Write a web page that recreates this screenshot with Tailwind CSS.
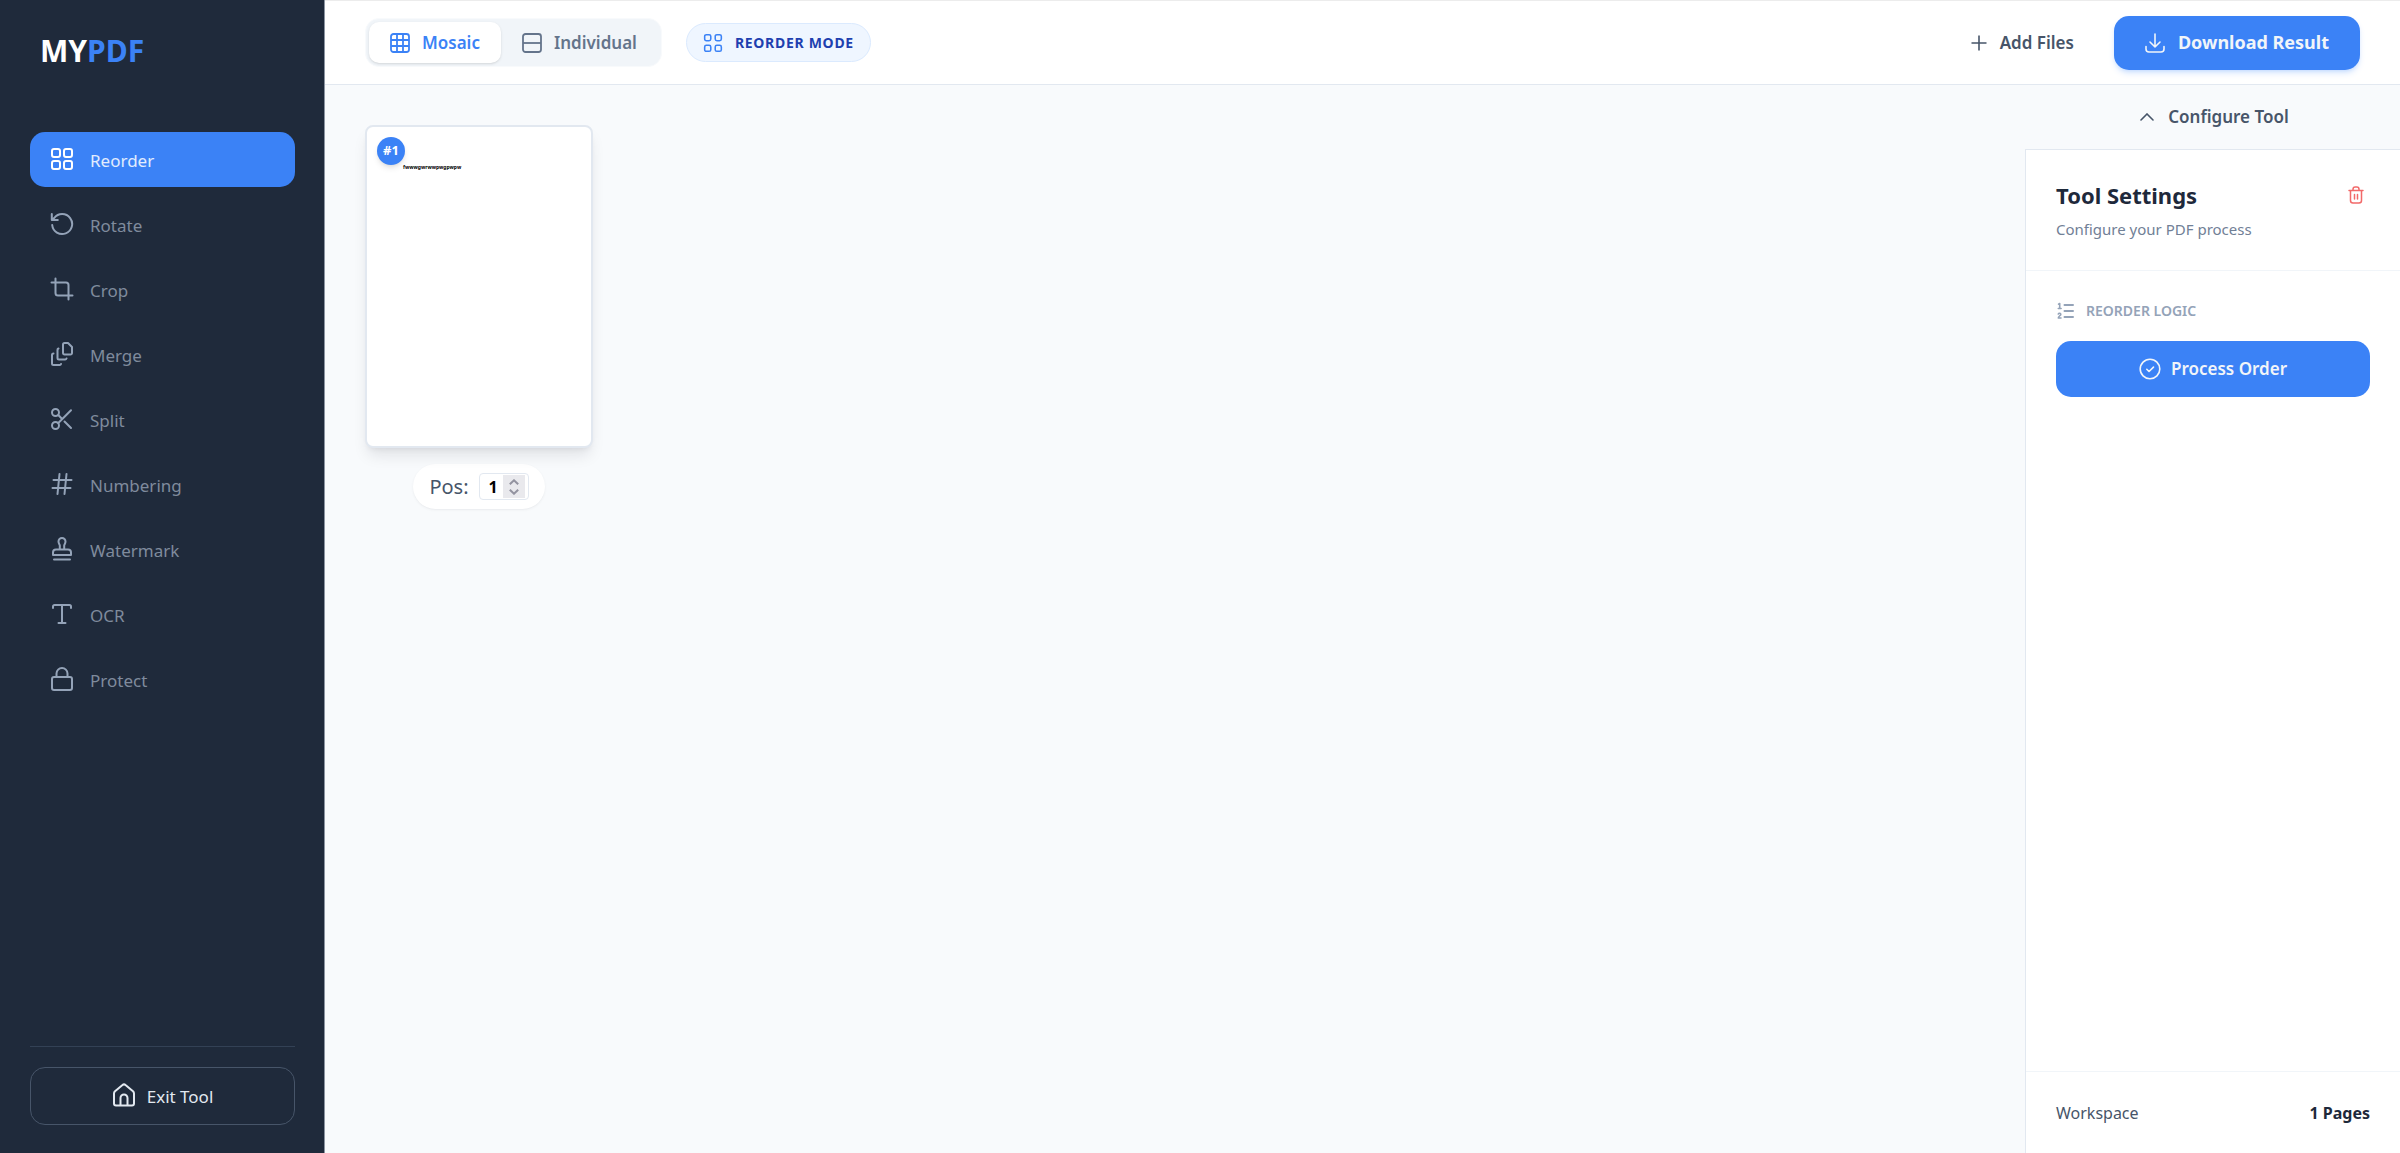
<!DOCTYPE html>
<html lang="en">
<head>
<meta charset="utf-8">
<meta name="viewport" content="width=device-width, initial-scale=1">
<title>MyPDF – Reorder</title>
<script src="https://cdn.jsdelivr.net/npm/@tailwindcss/browser@4"></script>
</head>
<body class="flex min-h-screen bg-[#f8fafc] font-['Noto_Sans',sans-serif] text-[#1e293b]">

<!-- Sidebar -->
<aside class="flex w-[325px] shrink-0 flex-col border-r border-[#8b94a1] bg-[#1f2a3b] pr-[29px] pl-[30px] pb-7">
  <a href="#" class="mt-[30px] ml-[10px] text-[30px] leading-[42px] font-bold text-white">MY<span class="text-[#3b82f6]">PDF</span></a>
  <nav class="mt-[60px] flex flex-col gap-[10px] text-[17px] text-[#94a3b8]">
    <a href="#" aria-current="page" class="flex h-[55px] items-center gap-4 rounded-[15px] bg-[#3b82f6] px-5 pt-[3px] text-white">
      <svg class="mb-1 size-6" viewBox="0 0 24 24" fill="none" stroke="currentColor" stroke-width="2"><rect x="2" y="2" width="8" height="8" rx="2"/><rect x="14" y="2" width="8" height="8" rx="2"/><rect x="2" y="14" width="8" height="8" rx="2"/><rect x="14" y="14" width="8" height="8" rx="2"/></svg>
      <span class="text-white/85">Reorder</span></a>
    <a href="#" class="flex h-[55px] items-center gap-4 rounded-[15px] px-5 pt-[3px]">
      <svg class="mb-1 size-6" viewBox="0 0 24 24" fill="none" stroke="currentColor" stroke-width="2" stroke-linecap="round" stroke-linejoin="round"><path d="M2.200 13A10 10 0 1 0 4.200 6L2 8M1.800 2v6h6"/></svg>
      <span class="text-[#7f8b9d]">Rotate</span></a>
    <a href="#" class="flex h-[55px] items-center gap-4 rounded-[15px] px-5 pt-[3px]">
      <svg class="mb-1 size-6" viewBox="0 0 24 24" fill="none" stroke="currentColor" stroke-width="2" stroke-linecap="round"><path d="M1.500 5.500H16a2.500 2.500 0 0 1 2.500 2.500V22.500M5.500 1.500V16a2.500 2.500 0 0 0 2.500 2.500H22.500"/></svg>
      <span class="text-[#7f8b9d]">Crop</span></a>
    <a href="#" class="flex h-[55px] items-center gap-4 rounded-[15px] px-5 pt-[3px]">
      <svg class="mb-1 size-6" viewBox="0 0 24 24" fill="none" stroke="currentColor" stroke-width="2" stroke-linecap="round" stroke-linejoin="round"><path d="M14.500 1h3.500l4 4v6a1.500 1.500 0 0 1-1.500 1.500h-6A1.500 1.500 0 0 1 13 11V2.500A1.500 1.500 0 0 1 14.500 1ZM8.500 6.500a1.500 1.500 0 0 0-1 1.500v8a1.500 1.500 0 0 0 1.500 1.500h6a1.500 1.500 0 0 0 1.500-1M3.500 11.500A1.500 1.500 0 0 0 2 13v8.500A1.500 1.500 0 0 0 3.500 23h6a1.500 1.500 0 0 0 1.500-1"/></svg>
      <span class="text-[#7f8b9d]">Merge</span></a>
    <a href="#" class="flex h-[55px] items-center gap-4 rounded-[15px] px-5 pt-[3px]">
      <svg class="mb-1 size-6" viewBox="0 0 24 24" fill="none" stroke="currentColor" stroke-width="2" stroke-linecap="round"><circle cx="5.500" cy="5.500" r="3.500"/><circle cx="5.500" cy="18.500" r="3.500"/><path d="M8.300 16 21 3.300M8.300 8l3.600 3.700M14.500 14.500 21 21"/></svg>
      <span class="text-[#7f8b9d]">Split</span></a>
    <a href="#" class="flex h-[55px] items-center gap-4 rounded-[15px] px-5 pt-[3px]">
      <svg class="mb-1 size-6" viewBox="0 0 24 24" fill="none" stroke="currentColor" stroke-width="2" stroke-linecap="round"><path d="M3.500 8h18M2.500 16h18M9.500 2l-2 20M16.500 2l-2 20"/></svg>
      <span class="text-[#7f8b9d]">Numbering</span></a>
    <a href="#" class="flex h-[55px] items-center gap-4 rounded-[15px] px-5 pt-[3px]">
      <svg class="mb-1 size-6" viewBox="0 0 24 24" fill="none" stroke="currentColor" stroke-width="2" stroke-linecap="round" stroke-linejoin="round"><path d="M9.800 12.500V8.500c0-1-1.300-2-1.300-4a3.500 3.500 0 0 1 7 0c0 2-1.300 3-1.300 4v4M3 18v-2.500a3 3 0 0 1 3-3h12a3 3 0 0 1 3 3V18ZM4 22.500h16"/></svg>
      <span class="text-[#7f8b9d]">Watermark</span></a>
    <a href="#" class="flex h-[55px] items-center gap-4 rounded-[15px] px-5 pt-[3px]">
      <svg class="mb-1 size-6" viewBox="0 0 24 24" fill="none" stroke="currentColor" stroke-width="2" stroke-linecap="round" stroke-linejoin="round"><path d="M3 6V4.500A1.500 1.500 0 0 1 4.500 3h15A1.500 1.500 0 0 1 21 4.500V6M12 3v18M8.500 21h7"/></svg>
      <span class="text-[#7f8b9d]">OCR</span></a>
    <a href="#" class="flex h-[55px] items-center gap-4 rounded-[15px] px-5 pt-[3px]">
      <svg class="mb-1 size-6" viewBox="0 0 24 24" fill="none" stroke="currentColor" stroke-width="2" stroke-linecap="round"><rect x="2" y="10" width="20" height="13" rx="2"/><path d="M6.500 10V6.500a5.500 5.500 0 0 1 11 0V10"/></svg>
      <span class="text-[#7f8b9d]">Protect</span></a>
  </nav>
  <div class="mt-auto border-t border-[#334155] pt-5">
    <button type="button" class="flex h-[58px] w-full items-center justify-center gap-[11px] rounded-[15px] border border-[#475569] pt-[2px] text-[17px] text-[#e2e8f0]">
      <svg class="mb-1 size-6" viewBox="0 0 24 24" fill="none" stroke="currentColor" stroke-width="2" stroke-linejoin="round"><path d="M2 10.500a3 3 0 0 1 1-2.200l7.500-6.200a2.200 2.200 0 0 1 3 0L21 8.300a3 3 0 0 1 1 2.200V20.500a2 2 0 0 1-2 2H4a2 2 0 0 1-2-2ZM8.500 22v-7a3.500 3.500 0 0 1 7 0v7"/></svg>
      Exit Tool</button>
  </div>
</aside>

<div class="flex min-w-0 flex-1 flex-col">
  <!-- Toolbar -->
  <header class="flex h-[85px] items-center border-t border-b border-t-[#ececec] border-b-[#e2e8f0] bg-white pr-10 pl-10">
    <div class="flex rounded-[14px] border border-[#f8fafc] bg-[#f1f5f9] p-[3px] text-[17px] leading-6 font-semibold">
      <button type="button" aria-pressed="true" class="flex h-[41px] items-center gap-3 rounded-[10px] bg-white px-[21px] text-[#3b82f6] shadow-sm">
        <svg class="size-5" viewBox="0 0 20 20" fill="none" stroke="currentColor" stroke-width="1.800"><rect x="1" y="1" width="18" height="18" rx="2.500"/><path d="M7 1v18M13 1v18M1 7h18M1 13h18"/></svg>
        Mosaic</button>
      <button type="button" aria-pressed="false" class="flex h-[41px] items-center gap-3 rounded-[10px] px-[21px] text-[#64748b]">
        <svg class="size-5" viewBox="0 0 20 20" fill="none" stroke="currentColor" stroke-width="1.800"><rect x="1" y="1" width="18" height="18" rx="2.500"/><path d="M1 10h18"/></svg>
        Individual</button>
    </div>
    <div class="ml-6 flex h-[39px] items-center gap-3 rounded-full border border-[#dbeafe] bg-[#eff6ff] px-4 text-[14px] font-bold tracking-wider text-[#1e40af]">
      <svg class="size-5 text-[#3b82f6]" viewBox="0 0 18 18" fill="none" stroke="currentColor" stroke-width="1.400"><rect x="1.500" y="1.500" width="5.500" height="5.500" rx="1.500"/><rect x="11" y="1.500" width="5.500" height="5.500" rx="1.500"/><rect x="1.500" y="11" width="5.500" height="5.500" rx="1.500"/><rect x="11" y="11" width="5.500" height="5.500" rx="1.500"/></svg>
      REORDER MODE</div>
    <button type="button" class="mr-10 ml-auto flex items-center gap-[13px] text-[17px] font-semibold text-[#475569]">
      <svg class="size-4" viewBox="0 0 16 16" fill="none" stroke="currentColor" stroke-width="1.600"><path d="M8 .5v15M.5 8h15"/></svg>
      Add Files</button>
    <button type="button" class="flex h-[54px] items-center gap-[13px] rounded-[15px] bg-[#3b82f6] px-[31px] text-[18px] font-bold text-[#f1f5f9] shadow-md shadow-blue-500/20">
      <svg class="size-5" viewBox="0 0 20 20" fill="none" stroke="currentColor" stroke-width="1.600" stroke-linecap="round" stroke-linejoin="round"><path d="M1 13.500V16a3 3 0 0 0 3 3h12a3 3 0 0 0 3-3v-2.500M10 1v13M5 9l5 5 5-5"/></svg>
      Download Result</button>
  </header>

  <div class="flex flex-1">
    <!-- Page grid -->
    <main class="flex flex-1 flex-wrap content-start gap-8 px-10 py-10">
      <article class="flex w-[228px] flex-col items-center gap-4">
        <div class="relative h-[323px] w-full rounded-[8px] border-2 border-[#e2e8f0] bg-white shadow-lg shadow-slate-900/10">
          <span class="absolute top-[10px] left-[10px] flex size-7 items-center justify-center rounded-full bg-[#3b82f6] text-[13px] font-bold text-white shadow-md">#1</span>
          <p class="pt-9 pl-9 text-[5px] leading-2 font-bold text-black">fwwwgwrwwpwgpwpw</p>
        </div>
        <div class="flex h-[45px] items-center gap-[10px] rounded-full bg-white px-4 text-[20px] text-[#475569] shadow-sm shadow-slate-900/5">
          <label for="pos">Pos:</label>
          <span class="flex h-[27px] w-[50px] items-center rounded-[4px] border border-[#e2e8f0] pr-[3px]">
            <input id="pos" type="text" inputmode="numeric" value="1" class="w-0 flex-1 pl-1 text-center text-[16px] font-bold text-black outline-none">
            <span class="flex h-[23px] w-[22px] flex-col items-center justify-center gap-1 bg-[#e9e9ed] text-[#9393a0]">
              <button type="button" aria-label="Increase position"><svg class="h-[6px] w-[10px]" viewBox="0 0 10 6" fill="none" stroke="currentColor" stroke-width="2"><path d="m.8 5.300 4.200-4 4.200 4"/></svg></button>
              <button type="button" aria-label="Decrease position"><svg class="h-[6px] w-[10px]" viewBox="0 0 10 6" fill="none" stroke="currentColor" stroke-width="2"><path d="m.8.700 4.200 4 4.200-4"/></svg></button>
            </span>
          </span>
        </div>
      </article>
    </main>

    <!-- Settings panel -->
    <aside class="flex w-[375px] shrink-0 flex-col">
      <button type="button" class="flex h-16 items-center justify-center gap-[14px] pl-1 text-[17px] font-semibold text-[#475569]">
        <svg class="h-2 w-[14px]" viewBox="0 0 14 8" fill="none" stroke="currentColor" stroke-width="1.600" stroke-linecap="round"><path d="m1 7 6-6 6 6"/></svg>
        Configure Tool</button>
      <section class="flex flex-1 flex-col border-t border-l border-[#e2e8f0] bg-white">
        <div class="flex h-[121px] justify-between border-b border-[#f1f5f9] pt-[30px] pr-[36px] pl-[30px]">
          <div>
            <h2 class="text-[22px] leading-[30px] font-bold">Tool Settings</h2>
            <p class="mt-[6px] text-[15px] leading-[26px] text-[#718096]">Configure your PDF process</p>
          </div>
          <button type="button" aria-label="Clear workspace" class="mt-[6px] h-[18px] text-[#ef4444]/80">
            <svg class="h-[18px] w-4" viewBox="0 0 16 18" fill="none" stroke="currentColor" stroke-width="1.500" stroke-linecap="round"><path d="M1 4.500h14M2.500 4.500v10a2.500 2.500 0 0 0 2.500 2.500h6a2.500 2.500 0 0 0 2.500-2.500v-10M5 4.500V3.200A2.200 2.200 0 0 1 7.200 1h1.600A2.200 2.200 0 0 1 11 3.200v1.300M6.500 8.500v4.500M9.500 8.500v4.500"/></svg>
          </button>
        </div>
        <div class="px-[30px] pt-7">
          <h3 class="flex items-center gap-3 text-[14px] leading-6 font-semibold text-[#94a3b8]">
            <svg class="h-[18px] w-[18px]" viewBox="0 0 18 18" fill="none" stroke="currentColor" stroke-width="2" stroke-linecap="round" stroke-linejoin="round"><path d="M8.500 3H17M8.500 9H17M8.500 15H17"/><path stroke-width="1.600" d="M2.500 2.200 3.700 1.500v5M2.300 6.500h2.800M2.300 12c.4-1 2.500-1 2.500.4 0 1.100-2.500 1.800-2.500 3.600H5"/></svg>
            REORDER LOGIC</h3>
          <button type="button" class="mt-[18px] flex h-14 w-full items-center justify-center gap-[10px] rounded-[15px] bg-[#3b82f6] text-[17px] font-semibold text-[#f1f5f9]">
            <svg class="size-[22px]" viewBox="0 0 22 22" fill="none" stroke="currentColor" stroke-width="1.600" stroke-linecap="round" stroke-linejoin="round"><circle cx="11" cy="11" r="9.800"/><path d="m7.800 11.300 2.200 2.200 4.500-4.400"/></svg>
            Process Order</button>
        </div>
        <div class="mt-auto flex h-[82px] items-center justify-between border-t border-[#f1f5f9] px-[30px] text-[16px]">
          <span class="text-[#475569]">Workspace</span>
          <strong class="font-bold">1 Pages</strong>
        </div>
      </section>
    </aside>
  </div>
</div>
</body>
</html>
